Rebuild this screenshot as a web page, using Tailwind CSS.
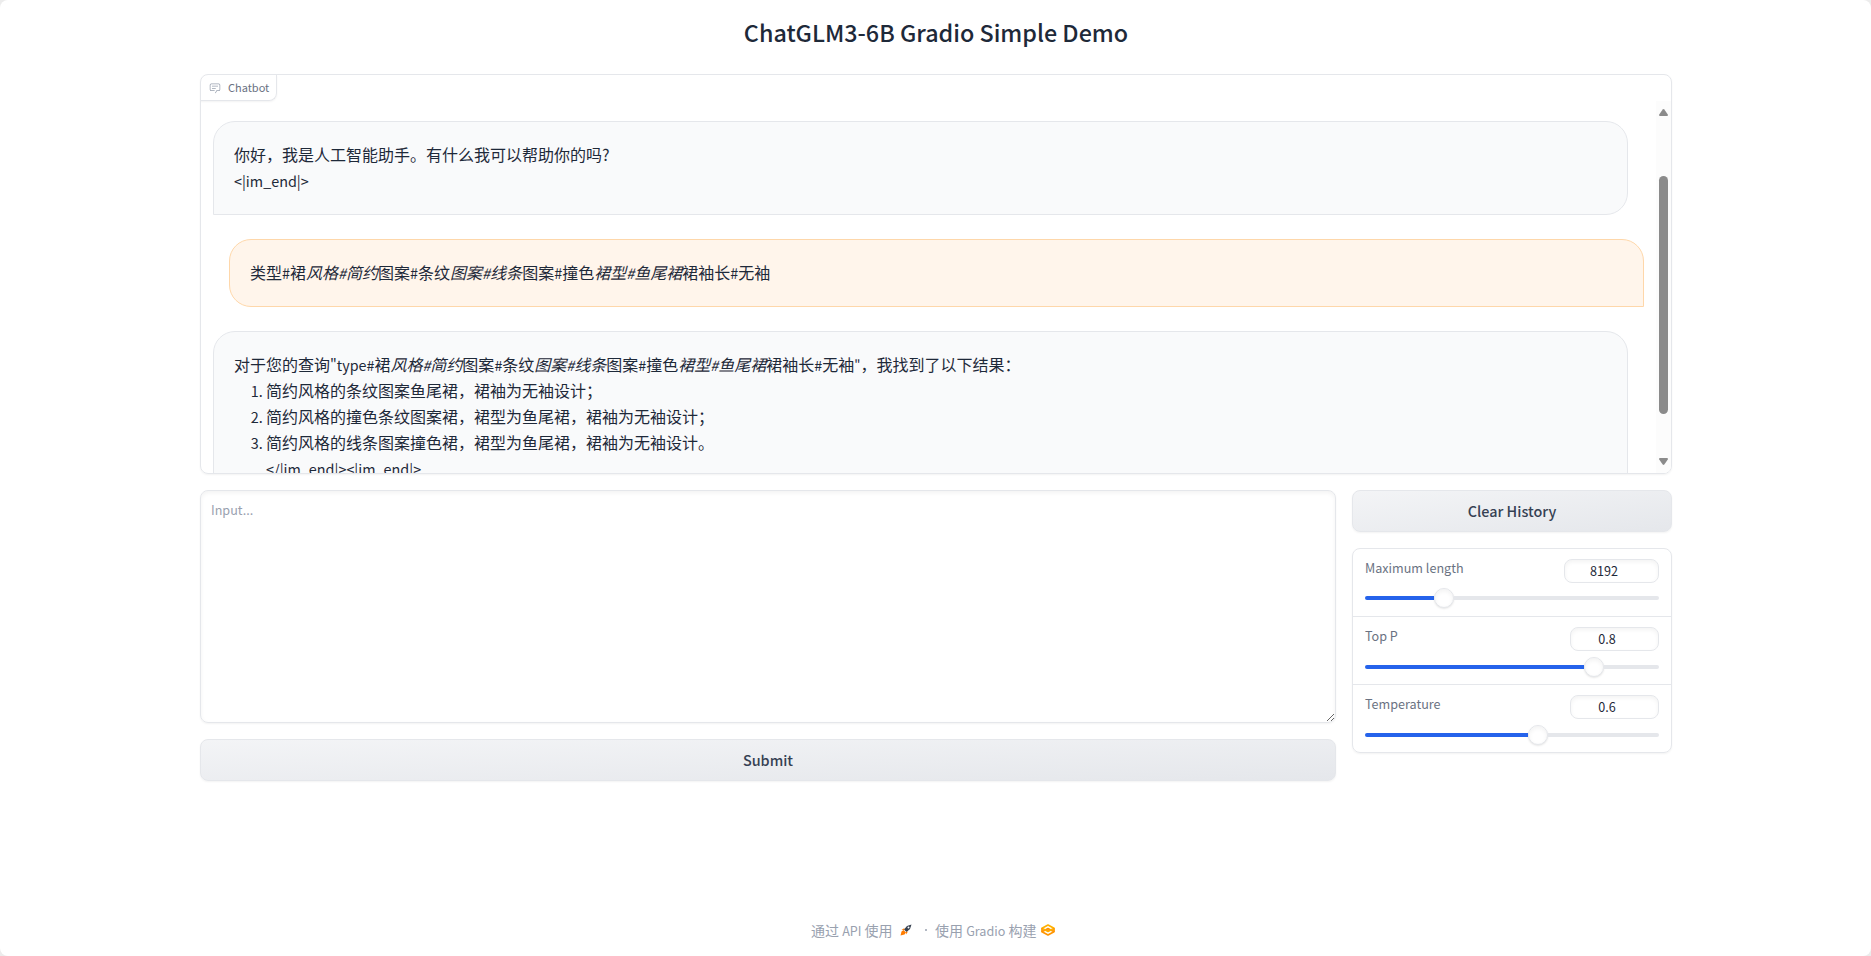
<!DOCTYPE html>
<html lang="zh">
<head>
<meta charset="utf-8">
<title>ChatGLM3-6B Gradio Simple Demo</title>
<script src="https://cdn.jsdelivr.net/npm/@tailwindcss/browser@4"></script>
</head>
<body class="h-screen overflow-hidden bg-[#ececec] font-['Noto_Sans_CJK_SC','Noto_Sans',sans-serif] text-gray-800">
<div class="flex h-[956px] w-[1871px] flex-col rounded-lg bg-white pr-[199px] pl-[200px]">
  <h1 class="mt-[12px] h-[62px] shrink-0 text-center text-[23.3px] leading-[40px] font-medium whitespace-nowrap">ChatGLM3-6B Gradio Simple Demo</h1>

  <section class="flex h-[400px] shrink-0 flex-col overflow-hidden rounded-lg border border-gray-200 shadow-[0_1px_2px_rgba(0,0,0,0.05)]">
    <div class="-ml-px flex h-[26px] w-[77px] shrink-0 items-center gap-[7px] rounded-br-lg border-r border-b border-gray-200 pl-[9px] text-[11px] leading-[22px] text-gray-500 shadow-[0_1px_2px_rgba(0,0,0,0.05)]">
      <svg class="size-[12px] shrink-0 text-gray-400" viewBox="0 0 32 32" fill="currentColor"><path d="M17.74 30 16 29l4-7h6a2 2 0 0 0 2-2V8a2 2 0 0 0-2-2H6a2 2 0 0 0-2 2v12a2 2 0 0 0 2 2h9v2H6a4 4 0 0 1-4-4V8a4 4 0 0 1 4-4h20a4 4 0 0 1 4 4v12a4 4 0 0 1-4 4h-4.84Z"/><path d="M8 10h16v2H8zM8 16h10v2H8z"/></svg>
      <span class="-mt-px">Chatbot</span>
    </div>
    <div class="flex min-h-0 flex-1">
      <div class="flex flex-1 flex-col gap-6 overflow-hidden pt-[20px] pr-[12px] pl-[12px] text-base leading-[26px]">
        <div class="mr-[16px] h-[94px] shrink-0 rounded-[22px] rounded-bl-none border border-gray-200 bg-[#f9fafb] px-5 pt-[19px]">
          <p class="h-[26px]">你好，我是人工智能助手。有什么我可以帮助你的吗?</p>
          <p class="pt-px text-[14.4px] leading-[26px]">&lt;|im_end|&gt;</p>
        </div>
        <div class="ml-[16px] h-[68px] shrink-0 rounded-[22px] rounded-br-none border border-[#fed7aa] bg-[#fff5eb] px-5 pt-[19px]">
          <p class="h-[26px]">类型<span class="text-[14.4px]">#</span>裙<em>风格<span class="text-[14.4px]">#</span>简约</em>图案<span class="text-[14.4px]">#</span>条纹<em>图案<span class="text-[14.4px]">#</span>线条</em>图案<span class="text-[14.4px]">#</span>撞色<em>裙型<span class="text-[14.4px]">#</span>鱼尾裙</em>裙袖长<span class="text-[14.4px]">#</span>无袖</p>
        </div>
        <div class="mr-[16px] h-[172px] shrink-0 rounded-[22px] rounded-bl-none border border-gray-200 bg-[#f9fafb] px-5 pt-[19px]">
          <p class="h-[26px]">对于您的查询<span class="text-[14.3px]">"type#</span>裙<em>风格<span class="text-[14.3px]">#</span>简约</em>图案<span class="text-[14.3px]">#</span>条纹<em>图案<span class="text-[14.3px]">#</span>线条</em>图案<span class="text-[14.3px]">#</span>撞色<em>裙型<span class="text-[14.3px]">#</span>鱼尾裙</em>裙袖长<span class="text-[14.3px]">#</span>无袖<span class="text-[13px]">"</span>，我找到了以下结果：</p>
          <ol class="list-decimal pl-8 marker:text-[14.4px]">
            <li class="h-[26px]">简约风格的条纹图案鱼尾裙，裙袖为无袖设计；</li>
            <li class="h-[26px]">简约风格的撞色条纹图案裙，裙型为鱼尾裙，裙袖为无袖设计；</li>
            <li class="h-[52px]">简约风格的线条图案撞色裙，裙型为鱼尾裙，裙袖为无袖设计。<br><span class="text-[14.4px]">&lt;/|im_end|&gt;&lt;|im_end|&gt;</span></li>
          </ol>
        </div>
      </div>
      <div class="flex w-[15px] flex-col items-center bg-[#fcfcfc] py-[8px] text-[#8b8b8b]">
        <svg class="h-[7px] w-[9px] shrink-0" viewBox="0 0 9 7" fill="currentColor"><path d="M3.7.5Q4.5-.4 5.3.5L8.8 5.5Q9.3 7 8 7H1Q-.3 7 .2 5.5Z"/></svg>
        <div class="mt-[60px] h-[238px] w-[9px] shrink-0 rounded-full bg-[#8b8b8b]"></div>
        <svg class="mt-auto h-[7px] w-[9px] shrink-0 rotate-180" viewBox="0 0 9 7" fill="currentColor"><path d="M3.7.5Q4.5-.4 5.3.5L8.8 5.5Q9.3 7 8 7H1Q-.3 7 .2 5.5Z"/></svg>
      </div>
    </div>
  </section>

  <main class="mt-4 flex items-start gap-4">
    <div class="flex w-[1136px] shrink-0 flex-col gap-4">
      <textarea class="block h-[233px] w-full resize-y rounded-lg border border-gray-200 px-[10px] py-[8px] text-[12.6px] leading-[21px] shadow-[inset_0_2px_4px_rgba(0,0,0,0.05),0_1px_2px_rgba(0,0,0,0.05)] placeholder:text-gray-400" placeholder="Input..."></textarea>
      <button class="h-[42px] rounded-lg border border-gray-200 bg-linear-to-br from-gray-100 to-gray-200 text-[14.4px] font-medium text-gray-700 shadow-[0_1px_2px_rgba(0,0,0,0.05)]">Submit</button>
    </div>
    <div class="flex w-[320px] shrink-0 flex-col gap-4">
      <button class="h-[42px] rounded-lg border border-gray-200 bg-linear-to-br from-gray-100 to-gray-200 text-[14.4px] font-medium text-gray-700 shadow-[0_1px_2px_rgba(0,0,0,0.05)]">Clear History</button>
      <div class="h-[205px] divide-y divide-gray-200 rounded-lg border border-gray-200 shadow-[0_1px_2px_rgba(0,0,0,0.05)]">
        <div class="h-[68px] px-3 pt-[10px]">
          <div class="flex h-[24px] justify-between">
            <label class="text-[12.6px] leading-[18px] text-gray-500">Maximum length</label>
            <div class="w-[95px] rounded-lg border border-gray-200 pr-[15px] text-center text-[12.6px] leading-[22px] shadow-[inset_0_2px_4px_rgba(0,0,0,0.05)]">8192</div>
          </div>
          <div class="mt-[5px] flex h-5 items-center">
            <div class="h-1 w-[69px] rounded-l-full bg-[#2563eb]"></div>
            <div class="size-5 shrink-0 rounded-full border border-gray-200 bg-white shadow-[inset_0_2px_4px_rgba(0,0,0,0.05),0_1px_2px_rgba(0,0,0,0.1)]"></div>
            <div class="h-1 flex-1 rounded-r-full bg-gray-200"></div>
          </div>
        </div>
        <div class="h-[68px] px-3 pt-[10px]">
          <div class="flex h-[24px] justify-between">
            <label class="text-[12.6px] leading-[18px] text-gray-500">Top P</label>
            <div class="w-[89px] rounded-lg border border-gray-200 pr-[15px] text-center text-[12.6px] leading-[22px] shadow-[inset_0_2px_4px_rgba(0,0,0,0.05)]">0.8</div>
          </div>
          <div class="mt-[6px] flex h-5 items-center">
            <div class="h-1 w-[219px] rounded-l-full bg-[#2563eb]"></div>
            <div class="size-5 shrink-0 rounded-full border border-gray-200 bg-white shadow-[inset_0_2px_4px_rgba(0,0,0,0.05),0_1px_2px_rgba(0,0,0,0.1)]"></div>
            <div class="h-1 flex-1 rounded-r-full bg-gray-200"></div>
          </div>
        </div>
        <div class="h-[67px] px-3 pt-[10px]">
          <div class="flex h-[24px] justify-between">
            <label class="text-[12.6px] leading-[18px] text-gray-500">Temperature</label>
            <div class="w-[89px] rounded-lg border border-gray-200 pr-[15px] text-center text-[12.6px] leading-[22px] shadow-[inset_0_2px_4px_rgba(0,0,0,0.05)]">0.6</div>
          </div>
          <div class="mt-[6px] flex h-5 items-center">
            <div class="h-1 w-[163px] rounded-l-full bg-[#2563eb]"></div>
            <div class="size-5 shrink-0 rounded-full border border-gray-200 bg-white shadow-[inset_0_2px_4px_rgba(0,0,0,0.05),0_1px_2px_rgba(0,0,0,0.1)]"></div>
            <div class="h-1 flex-1 rounded-r-full bg-gray-200"></div>
          </div>
        </div>
      </div>
    </div>
  </main>

  <footer class="mt-auto mb-[15px] ml-[611px] flex h-[22px] items-center text-sm whitespace-nowrap text-gray-400">
    <span class="w-[80px]">通过 <span class="text-[12.6px]">API</span> 使用</span>
    <svg class="ml-[9px] size-[12px]" viewBox="0 0 24 24"><path d="M23 1 14 4 8 11l5 5 7-6z" fill="#374151"/><path d="m9 8-6 4 5 0zM16 15l-4 6 0-5zM7 12l5 5-3 4-8 2 2-8z" fill="#ff7c00"/><circle cx="17" cy="7" r="2" fill="#fff"/></svg>
    <span class="ml-[13px] size-[2px] rounded-full bg-gray-400"></span>
    <span class="ml-[8px] w-[101px]">使用 <span class="text-[12.6px]">Gradio</span> 构建</span>
    <svg class="ml-[5px] h-[12px] w-[14px]" viewBox="0 0 28 24" fill="none" stroke-linejoin="round" stroke-width="3.4"><path d="M14 9 2 15.500 14 22l12-6.500z" stroke="#ff9500"/><path d="M14 2 2 8.500 14 15l12-6.500z" stroke="#ffb000"/><path d="M2 8.500v7M26 8.500v7" stroke="#ff9500"/><path d="m10 12 4-2 4 2-4 2z" fill="#ff9500"/></svg>
  </footer>
</div>
</body>
</html>
